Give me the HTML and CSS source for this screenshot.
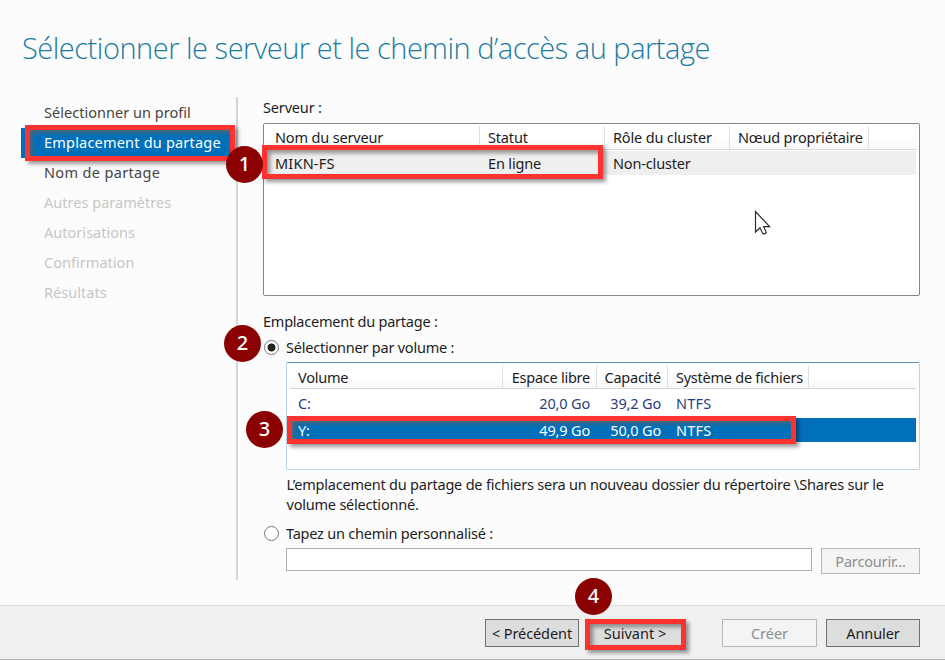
FILE: index.html
```html
<!DOCTYPE html>
<html lang="fr">
<head>
<meta charset="utf-8">
<title>Assistant Nouveau partage</title>
<link rel="stylesheet" href="styles.css">
</head>
<body>
<div class="wizard">
  <h1 class="title">Sélectionner le serveur et le chemin d’accès au partage</h1>
  <div class="body">
    <nav class="steps">
      <div class="step">Sélectionner un profil</div>
      <div class="step current">Emplacement du partage</div>
      <div class="step wide">Nom de partage</div>
      <div class="step off">Autres paramètres</div>
      <div class="step off">Autorisations</div>
      <div class="step off">Confirmation</div>
      <div class="step off">Résultats</div>
    </nav>
    <main class="content">
      <div class="label">Serveur :</div>
      <div class="list servers">
        <div class="row head"><div>Nom du serveur</div><div>Statut</div><div>Rôle du cluster</div><div>Nœud propriétaire</div></div>
        <div class="row picked"><div class="caps">MIKN-FS</div><div>En ligne</div><div>Non-cluster</div><div></div></div>
      </div>
      <div class="label place">Emplacement du partage :</div>
      <div class="option"><i class="radio on"></i><span>Sélectionner par volume :</span></div>
      <div class="list volumes">
        <div class="row head"><div>Volume</div><div class="num">Espace libre</div><div class="num">Capacité</div><div>Système de fichiers</div></div>
        <div class="row vol"><div>C:</div><div class="num">20,0 Go</div><div class="num">39,2 Go</div><div class="caps">NTFS</div></div>
        <div class="row active"><div>Y:</div><div class="num">49,9 Go</div><div class="num">50,0 Go</div><div class="caps">NTFS</div></div>
      </div>
      <p class="hint">L’emplacement du partage de fichiers sera un nouveau dossier du répertoire \Shares sur le<br>volume sélectionné.</p>
      <div class="option custom"><i class="radio"></i><span>Tapez un chemin personnalisé :</span></div>
      <div class="path"><div class="field"></div><div class="btn disabled browse">Parcourir...</div></div>
    </main>
  </div>
  <footer class="footer">
    <div class="btn prev">&lt; Précédent</div>
    <div class="btn next">Suivant &gt;</div>
    <div class="btn disabled create">Créer</div>
    <div class="btn cancel">Annuler</div>
  </footer>
  <div class="mark mark-step"></div>
  <div class="mark mark-server"></div>
  <div class="mark mark-volume"></div>
  <div class="mark mark-next"></div>
  <div class="badge b1">1</div>
  <div class="badge b2">2</div>
  <div class="badge b3">3</div>
  <div class="badge b4">4</div>
  <svg class="cursor" width="18" height="26" viewBox="0 0 18 26"><path d="M1.5 1.5V22L6 17.8L8.6 23.2Q10.8 25 12.3 22.6L9.6 16.6H15.6Z" fill="#fff" stroke="#2a2a30" stroke-width="1.2"/></svg>
</div>
</body>
</html>
```

FILE: styles.css
```css
* { box-sizing: border-box; }
body { margin: 0; font: 14.5px/20px "Noto Sans", "Open Sans", sans-serif; color: #1c1c1c; }
.wizard { position: relative; width: 945px; height: 660px; overflow: hidden; display: flex; flex-direction: column; background: #fcfcfc; white-space: nowrap; }
.title { margin: 0; height: 97px; padding: 28px 0 0 22px; font: 300 29px/40px "Open Sans", "Noto Sans", sans-serif; letter-spacing: -.48px; color: #1b7ba3; }
.body { display: flex; height: 508px; }
.steps { width: 238px; height: 483px; padding: 1px 1px 0 21px; border-right: 2px solid #d5d5d5; letter-spacing: .03px; }
.step { height: 30px; padding-left: 23px; line-height: 29px; color: #444; }
.step.current { background: #0070bb; color: #fff; letter-spacing: .2px; }
.step.wide { letter-spacing: .35px; }
.step.off { color: #c6c6c6; }
.content { width: 682px; padding-left: 25px; letter-spacing: -.16px; }
.label { height: 26px; line-height: 20px; }
.list { border: 1px solid #828790; border-radius: 2px; background: #fff; padding: 2px 3px 0; }
.row { display: grid; }
.head { height: 24px; line-height: 22px; border-bottom: 1px solid #d5d5d5; background: linear-gradient(#fff 50%, #f7f8fa); }
.volumes .head { line-height: 24px; letter-spacing: -.25px; }
.head > div { border-right: 1px solid #dedfe1; }
.row > div { padding-left: 8px; }
.row > .num { padding: 0 7px 0 0; text-align: right; }
.head > .num { padding-right: 6px; }
.row > .caps { letter-spacing: .2px; }
.servers { height: 173px; }
.servers .row { grid-template-columns: 213px 125px 125px 139px 1fr; }
.picked { margin-top: 1px; height: 24px; line-height: 24px; background: #efefef; }
.place { margin-top: 15px; height: 26px; line-height: 20px; letter-spacing: -.23px; }
.option { display: flex; align-items: center; gap: 8px; height: 20px; letter-spacing: -.22px; }
.radio { width: 15px; height: 15px; margin-left: 1px; margin-right: -1px; border: 1px solid #777; border-radius: 50%; background: #fff; }
.radio.on { background: radial-gradient(circle, #222 3.6px, #fff 4.4px); }
.volumes { width: 634px; height: 108px; margin: 5px 0 0 23px; border-color: #5b93bd #b9d6e9 #b9d6e9; }
.volumes .row { grid-template-columns: 213px 94px 71px 141px 1fr; }
.vol { height: 29px; line-height: 28px; color: #263f80; }
.active { height: 24px; line-height: 24px; background: #0070bb; color: #fff; }
.hint { margin: 4px 0 9px 23.5px; line-height: 20px; letter-spacing: -.21px; }
.path { display: flex; gap: 9px; margin: 5px 0 0 23px; }
.field { width: 526px; height: 23px; border: 1px solid #abadb3; background: #fff; }
.btn { display: flex; justify-content: center; align-items: center; height: 28px; border: 1px solid #707070; background: #ddd; }
.disabled { border-color: #b3b9bb; background: #f4f4f4; color: #8b8f91; }
.browse { width: 99px; height: 26px; }
.footer { display: flex; height: 55px; padding: 13px 0 0 485px; background: #f0f0f0; border-top: 1px solid #dcdcdc; border-bottom: 1px solid #b4b4b4; }
.prev { width: 94px; letter-spacing: -.1px; }
.next { width: 94px; margin-left: 9px; }
.create { width: 95px; margin-left: 40px; }
.cancel { width: 94px; margin-left: 9px; letter-spacing: -.1px; }
.mark { position: absolute; border: 5px solid #ff3232; box-shadow: 3px 3px 4px rgba(0,0,0,.4), inset 3px 3px 4px rgba(100,100,100,.7); }
.mark-step { left: 25px; top: 125px; width: 210px; height: 36px; }
.mark-server { left: 262px; top: 145px; width: 341px; height: 34px; }
.mark-volume { left: 287px; top: 416px; width: 509px; height: 28px; }
.mark-next { left: 585px; top: 619px; width: 101px; height: 31px; }
.badge { position: absolute; width: 37px; height: 37px; border-radius: 50%; background: #8b0000; color: #fff; font: 500 20px/36px "Noto Sans", sans-serif; text-align: center; }
.b1 { left: 226px; top: 146px; }
.b2 { left: 224px; top: 325px; }
.b3 { left: 246px; top: 411px; }
.b4 { left: 575px; top: 578px; }
.cursor { position: absolute; left: 754px; top: 210px; }
```
